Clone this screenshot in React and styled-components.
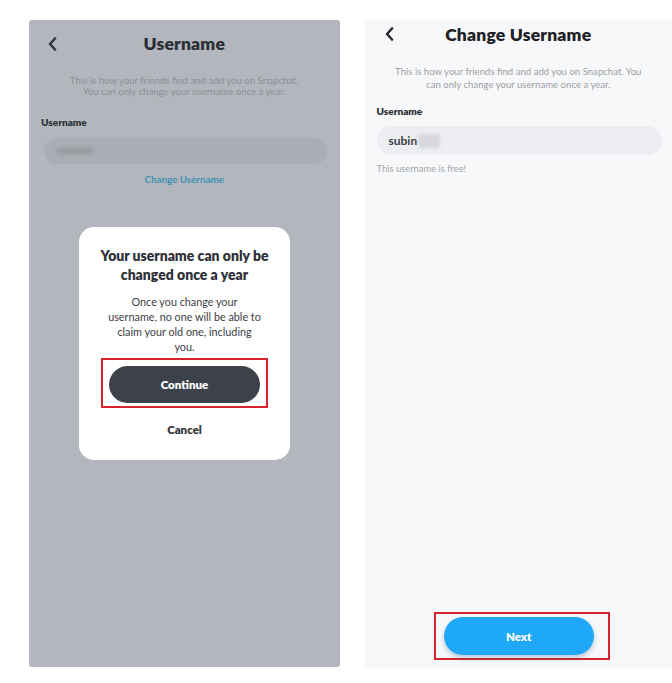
import React from 'react'
import styled, {createGlobalStyle} from 'styled-components'

const Global = createGlobalStyle`
  html, body {
    margin: 0;
    padding: 0;
    background: #ffffff;
    font-family: Lato, "Noto Sans", Arial, sans-serif;
  }
`

const Page = styled.div`
  display: flex;
  flex-direction: row;
  align-items: flex-start;
  gap: 25px;
  padding: 20px 0 0 29px;
  width: 672px;
  height: 683px;
  box-sizing: border-box;
  overflow: hidden;
`

const Phone = styled.div`
  position: relative;
  display: flex;
  flex-direction: column;
  box-sizing: border-box;
  width: ${p => p.$w}px;
  height: ${p => p.$h}px;
  background: ${p => p.$bg};
  border-radius: ${p => p.$radius || 0}px;
`

const Header = styled.div`
  position: relative;
  display: flex;
  align-items: center;
  justify-content: center;
  height: ${p => p.$h}px;
  flex-shrink: 0;
`

const Back = styled.div`
  position: absolute;
  left: ${p => p.$left}px;
  top: 50%;
  transform: translateY(-50%);
  display: flex;
`

const Title = styled.h1`
  margin: 0;
  font-size: 17.5px;
  font-weight: 800;
  color: ${p => p.$color};
  letter-spacing: 0.2px;
`

const Description = styled.p`
  margin: ${p => p.$mt}px 10px 0;
  text-align: center;
  font-size: ${p => p.$size}px;
  line-height: ${p => p.$lh}px;
  color: ${p => p.$color};
  white-space: nowrap;
`

const Label = styled.div`
  margin: ${p => p.$mt}px 0 0 ${p => p.$ml}px;
  font-size: 10px;
  line-height: 12px;
  font-weight: 800;
  color: ${p => p.$color};
`

const Field = styled.div`
  display: flex;
  align-items: center;
  margin: ${p => p.$mt}px ${p => p.$mr}px 0 ${p => p.$ml}px;
  height: ${p => p.$h}px;
  padding-left: 12px;
  border-radius: 15px;
  background: ${p => p.$bg};
`

const Blurred = styled.span`
  display: inline-block;
  width: ${p => p.$w}px;
  height: ${p => p.$h}px;
  background: ${p => p.$bg};
  filter: blur(${p => p.$blur}px);
  border-radius: 3px;
`

const Typed = styled.span`
  font-size: 12px;
  font-weight: 700;
  color: #3a3d43;
  margin-right: 1px;
`

const LinkText = styled.div`
  margin-top: 9px;
  text-align: center;
  font-size: 9.8px;
  line-height: 12px;
  font-weight: 700;
  color: #3f93b3;
`

const Hint = styled.div`
  margin: 8px 0 0 12px;
  font-size: 9.4px;
  line-height: 11px;
  color: #a2a5aa;
`

const Modal = styled.div`
  position: absolute;
  left: 50px;
  top: 207px;
  width: 211px;
  height: 233px;
  box-sizing: border-box;
  background: #ffffff;
  border-radius: 15px;
  display: flex;
  flex-direction: column;
  align-items: center;
  padding-top: 19px;
`

const ModalTitle = styled.div`
  font-size: 14px;
  line-height: 19px;
  font-weight: 800;
  text-align: center;
  color: #2e3138;
  white-space: nowrap;
`

const ModalText = styled.div`
  margin-top: 10px;
  font-size: 10.8px;
  line-height: 15px;
  text-align: center;
  color: #3a3d44;
  white-space: nowrap;
`

const Highlight = styled.div`
  display: flex;
  border: 2px solid #d8232f;
  padding: ${p => p.$pad};
  margin: ${p => p.$margin};
`

const Pill = styled.button`
  border: none;
  width: ${p => p.$w}px;
  height: ${p => p.$h}px;
  border-radius: 20px;
  background: ${p => p.$bg};
  color: #ffffff;
  font-family: inherit;
  font-size: 11.5px;
  font-weight: 800;
  box-shadow: ${p => p.$shadow || 'none'};
`

const CancelText = styled.div`
  margin-top: 15px;
  font-size: 11.5px;
  font-weight: 800;
  color: #33363c;
`

const Footer = styled.div`
  margin-top: auto;
  display: flex;
  justify-content: center;
  padding: 0 0 8px 7px;
`

const Chevron = ({color}) => (
  <svg width="9" height="14" viewBox="0 0 9 14">
    <polyline points="7,1.5 2,7 7,12.5" fill="none" stroke={color} strokeWidth="2.6" strokeLinecap="round" strokeLinejoin="round" />
  </svg>
)

function App() {
  return (
    <Page>
      <Global />
      <Phone $w={311} $h={647} $bg="#b3b6bd" $radius={3}>
        <Header $h={47}>
          <Back $left={19}><Chevron color="#34373d" /></Back>
          <Title $color="#2b2e35">Username</Title>
        </Header>
        <Description $mt={8} $size={9.6} $lh={11} $color="#8c9097">
          This is how your friends find and add you on Snapchat.<br />
          You can only change your username once a year.
        </Description>
        <Label $mt={19} $ml={12} $color="#2f3238">Username</Label>
        <Field $mt={10} $ml={15} $mr={13} $h={26} $bg="#abaeb4">
          <Blurred $w={38} $h={6} $bg="#95989f" $blur={2} />
        </Field>
        <LinkText>Change Username</LinkText>
        <Modal>
          <ModalTitle>Your username can only be<br />changed once a year</ModalTitle>
          <ModalText>
            Once you change your<br />
            username, no one will be able to<br />
            claim your old one, including<br />
            you.
          </ModalText>
          <Highlight $pad="6px 6px 3px 6px" $margin="4px 0 0 0">
            <Pill $w={151} $h={37} $bg="#3d424a">Continue</Pill>
          </Highlight>
          <CancelText>Cancel</CancelText>
        </Modal>
      </Phone>
      <Phone $w={308} $h={648} $bg="#f7f8fa">
        <Header $h={28}>
          <Back $left={20}><Chevron color="#2a2c31" /></Back>
          <Title $color="#1e2025">Change Username</Title>
        </Header>
        <Description $mt={17} $size={9.6} $lh={13} $color="#9c9fa4">
          This is how your friends find and add you on Snapchat. You<br />
          can only change your username once a year.
        </Description>
        <Label $mt={14} $ml={12} $color="#2a2d33">Username</Label>
        <Field $mt={9} $ml={12} $mr={10} $h={29} $bg="#eceef1">
          <Typed>subin</Typed>
          <Blurred $w={22} $h={14} $bg="#d6d8dc" $blur={1.5} />
        </Field>
        <Hint>This username is free!</Hint>
        <Footer>
          <Highlight $pad="3px 14px 3px 8px" $margin="0">
            <Pill $w={150} $h={38} $bg="#1fa8f8" $shadow="0 3px 5px rgba(40,90,140,0.3)">Next</Pill>
          </Highlight>
        </Footer>
      </Phone>
    </Page>
  )
}

export default App
